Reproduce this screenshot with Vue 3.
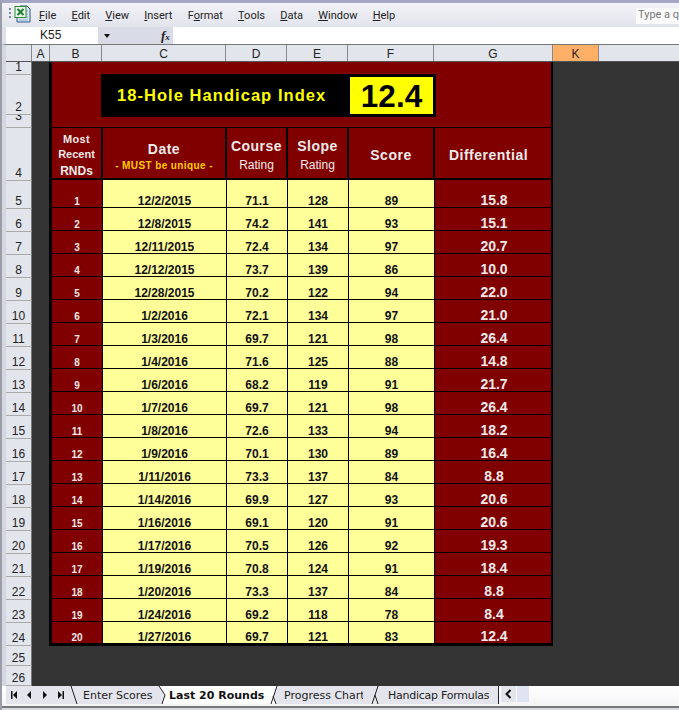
<script setup>
const columns = [
  { name: 'A', width: 18 },
  { name: 'B', width: 52 },
  { name: 'C', width: 124 },
  { name: 'D', width: 61 },
  { name: 'E', width: 61 },
  { name: 'F', width: 86 },
  { name: 'G', width: 119 },
  { name: 'K', width: 46, active: true },
]

const menuItems = [
  { before: '', key: 'F', after: 'ile' },
  { before: '', key: 'E', after: 'dit' },
  { before: '', key: 'V', after: 'iew' },
  { before: '', key: 'I', after: 'nsert' },
  { before: 'F', key: 'o', after: 'rmat' },
  { before: '', key: 'T', after: 'ools' },
  { before: '', key: 'D', after: 'ata' },
  { before: '', key: 'W', after: 'indow' },
  { before: '', key: 'H', after: 'elp' },
]

const rounds = [
  ['12/2/2015', '71.1', 128, 89, '15.8'],
  ['12/8/2015', '74.2', 141, 93, '15.1'],
  ['12/11/2015', '72.4', 134, 97, '20.7'],
  ['12/12/2015', '73.7', 139, 86, '10.0'],
  ['12/28/2015', '70.2', 122, 94, '22.0'],
  ['1/2/2016', '72.1', 134, 97, '21.0'],
  ['1/3/2016', '69.7', 121, 98, '26.4'],
  ['1/4/2016', '71.6', 125, 88, '14.8'],
  ['1/6/2016', '68.2', 119, 91, '21.7'],
  ['1/7/2016', '69.7', 121, 98, '26.4'],
  ['1/8/2016', '72.6', 133, 94, '18.2'],
  ['1/9/2016', '70.1', 130, 89, '16.4'],
  ['1/11/2016', '73.3', 137, 84, '8.8'],
  ['1/14/2016', '69.9', 127, 93, '20.6'],
  ['1/16/2016', '69.1', 120, 91, '20.6'],
  ['1/17/2016', '70.5', 126, 92, '19.3'],
  ['1/19/2016', '70.8', 124, 91, '18.4'],
  ['1/20/2016', '73.3', 137, 84, '8.8'],
  ['1/24/2016', '69.2', 118, 78, '8.4'],
  ['1/27/2016', '69.7', 121, 83, '12.4'],
]

const rowHeads = [
  { label: 1, height: 13 },
  { label: 2, height: 40 },
  { label: 3, height: 13, pad: 4 }, // squashed row, label is clipped like in Excel
  { label: 4, height: 53 },
  { label: 5, height: 28 },
  ...Array.from({ length: 19 }, (_, i) => ({ label: i + 6, height: 23 })),
  { label: 25, height: 20 },
  { label: 26, height: 20 },
]

// sheet tabs and the slanted separators that sit in front of each one
const gray = '#e4e5ec'
const tabs = [
  { name: 'Enter Scores', width: 70, sep: { width: 13, left: gray, right: gray, d: 'M1 0L7 18', poly: '' } },
  { name: 'Last 20 Rounds', width: 97, current: true, sep: { width: 16, left: gray, right: '#ffffff', d: 'M6 0L12 9L9 18', poly: '6,0 16,0 16,18 9,18 12,9' } },
  { name: 'Progress Chart', width: 79, sep: { width: 18, left: '#ffffff', right: gray, d: 'M11 0L5 18M7 10L10 18', poly: '11,0 18,0 18,18 10,18 7,10' } },
  { name: 'Handicap Formulas', width: 101, tight: true, sep: { width: 25, left: gray, right: gray, d: 'M15 0L9 18M12 9L15 18', poly: '' } },
]
</script>

<template>
  <div class="window">
    <div class="menubar">
      <svg class="doc-icon" width="24" height="20" viewBox="0 0 24 20">
        <rect x="1" y="3" width="2" height="2" fill="#7a8699" />
        <rect x="1" y="7" width="2" height="2" fill="#7a8699" />
        <rect x="1" y="11" width="2" height="2" fill="#7a8699" />
        <path d="M12 1h7l3 3v13H9V12z" fill="#dbe6f4" stroke="#31568c" />
        <path d="M14 6h6M14 9h6M14 12h6M11 15h9" stroke="#8fa8cc" />
        <rect x="7" y="1.5" width="11" height="11" fill="#e9f5e6" stroke="#2c8a3a" />
        <path d="M9.5 4l6 6M15.5 4l-6 6" stroke="#1f7d2f" stroke-width="2" />
      </svg>
      <span v-for="item in menuItems" :key="item.key" class="menu-item">{{ item.before }}<u>{{ item.key }}</u>{{ item.after }}</span>
      <span class="help-box">Type a q</span>
    </div>

    <div class="formula-bar">
      <div class="name-box">K55</div>
      <div class="name-tools">
        <span class="drop-arrow"></span>
        <span class="fx">f<small>x</small></span>
      </div>
      <div class="formula-input"></div>
    </div>

    <div class="sheet">
      <div class="col-heads">
        <div class="corner"></div>
        <div
          v-for="col in columns"
          :key="col.name"
          class="col-head"
          :class="{ active: col.active }"
          :style="{ width: col.width + 'px' }"
        >{{ col.name }}</div>
        <div class="col-head fill"></div>
      </div>

      <div class="sheet-body">
        <div class="row-heads">
          <div
            v-for="row in rowHeads"
            :key="row.label"
            class="row-head"
            :style="{ height: row.height + 'px', paddingBottom: (row.pad || 0) + 'px' }"
          >{{ row.label }}</div>
        </div>

        <div class="canvas">
          <div class="card">
            <div class="spacer-row"></div>
            <div class="title-row">
              <div class="title-box">
                <span class="title-text">18-Hole Handicap Index</span>
                <span class="index-box">12.4</span>
              </div>
            </div>
            <div class="spacer-row"></div>

            <div class="table-head">
              <div class="th rnds"><span class="most">Most</span><span>Recent</span><span class="rnds-big">RNDs</span></div>
              <div class="th date"><b class="th-main">Date</b><span class="must">- MUST be unique -</span></div>
              <div class="th low"><b class="th-main tall">Course</b><span class="th-sub">Rating</span></div>
              <div class="th low"><b class="th-main tall">Slope</b><span class="th-sub">Rating</span></div>
              <div class="th"><b class="th-main">Score</b></div>
              <div class="th last"><b class="th-main">Differential</b></div>
            </div>

            <div
              v-for="(round, i) in rounds"
              :key="i"
              class="round"
              :class="{ first: i === 0 }"
            >
              <div class="td num">{{ i + 1 }}</div>
              <div class="td">{{ round[0] }}</div>
              <div class="td">{{ round[1] }}</div>
              <div class="td">{{ round[2] }}</div>
              <div class="td">{{ round[3] }}</div>
              <div class="td diff">{{ round[4] }}</div>
            </div>
          </div>
        </div>
      </div>
    </div>

    <div class="tabbar">
      <div class="tab-nav">
        <svg width="64" height="18" viewBox="0 0 64 18">
          <path d="M5 5h1.5v8H5zM11 5v8L7 9z" fill="#111" />
          <path d="M25 5v8l-4-4z" fill="#111" />
          <path d="M37 5v8l4-4z" fill="#111" />
          <path d="M52 5v8l4-4zM56.5 5H58v8h-1.5z" fill="#111" />
        </svg>
      </div>
      <template v-for="tab in tabs" :key="tab.name">
        <svg class="tab-sep" :width="tab.sep.width" height="18" :viewBox="`0 0 ${tab.sep.width} 18`">
          <rect :width="tab.sep.width" height="18" :fill="tab.sep.left" />
          <polygon v-if="tab.sep.poly" :points="tab.sep.poly" :fill="tab.sep.right" />
          <path :d="tab.sep.d" stroke="#222" fill="none" />
        </svg>
        <div class="tab" :class="{ current: tab.current, tight: tab.tight }" :style="{ width: tab.width + 'px' }">{{ tab.name }}</div>
      </template>
      <div class="tab-end"></div>
      <div class="scroll-btn">
        <svg width="15" height="16" viewBox="0 0 15 16">
          <path d="M9.5 4L5.5 8l4 4" fill="none" stroke="#111" stroke-width="2" />
        </svg>
      </div>
      <div class="scroll-thumb"></div>
    </div>
    <div class="frame-bottom"></div>
  </div>
</template>

<style>
html, body {
  margin: 0;
  background: #333333;
}
</style>

<style scoped>
.window {
  width: 679px;
  height: 710px;
  overflow: hidden;
  display: flex;
  flex-direction: column;
  background: #e6e8f0;
  font-family: "Liberation Sans", Arial, sans-serif;
  border-top: 3px solid #a5a5c4;
  border-left: 2px solid #9a9ca8;
  box-sizing: border-box;
}

.menubar {
  height: 24px;
  flex: none;
  display: flex;
  align-items: center;
  padding-left: 6px;
  background: linear-gradient(#f2f3f7, #e2e4ec);
  font-family: Roboto, Tahoma, sans-serif;
  font-size: 11px;
  color: #222;
  position: relative;
}

.doc-icon {
  margin-right: 7px;
}

.menu-item {
  margin-right: 15.2px;
}

.help-box {
  position: absolute;
  right: 0;
  top: 5px;
  width: 41px;
  height: 16px;
  padding-left: 2px;
  background: #fafafa;
  color: #777;
  line-height: 14px;
  overflow: hidden;
  white-space: nowrap;
}

.formula-bar {
  height: 17px;
  flex: none;
  display: flex;
  padding-left: 4px;
  background: #dfe1ea;
}

.name-box {
  width: 92px;
  background: #fff;
  padding-left: 34px;
  box-sizing: border-box;
  font-size: 12px;
  line-height: 17px;
  color: #222;
}

.name-tools {
  width: 75px;
  display: flex;
  align-items: center;
  background: #d9dbe6;
}

.drop-arrow {
  margin-left: 6px;
  width: 0;
  height: 0;
  border: 3.5px solid transparent;
  border-top: 4px solid #111;
  border-bottom: 0;
}

.fx {
  margin-left: 51px;
  font-family: "Liberation Serif", serif;
  font-style: italic;
  font-weight: bold;
  font-size: 13px;
  color: #222;
}

.fx small {
  font-size: 9px;
}

.formula-input {
  flex: 1;
  background: #fff;
}

.sheet {
  height: 642px;
  flex: none;
  border-left: 4px solid #d4d6e0;
  box-sizing: border-box;
  background: #333333;
  border-top: 1px solid #777;
  overflow: hidden;
}

.col-heads {
  height: 17px;
  display: flex;
  background: #e3e5ec;
  border-bottom: 1px solid #555;
  box-sizing: border-box;
}

.corner {
  width: 26px;
  flex: none;
  border-right: 1px solid #888;
  box-sizing: border-box;
}

.col-head {
  flex: none;
  box-sizing: border-box;
  border-right: 1px solid #888;
  text-align: center;
  font-size: 12px;
  line-height: 18px;
  color: #222;
}

.col-head.active {
  background: #ffb066;
}

.col-head.fill {
  flex: 1;
  border-right: 0;
}

.sheet-body {
  display: flex;
}

.row-heads {
  width: 26px;
  flex: none;
}

.row-head {
  box-sizing: border-box;
  background: #e3e5ec;
  border-bottom: 1px solid #aaa;
  border-right: 1px solid #777;
  display: flex;
  align-items: flex-end;
  justify-content: center;
  font-size: 12px;
  line-height: 14px;
  color: #222;
  overflow: hidden;
}

.canvas {
  flex: 1;
  padding-left: 17px;
}

.card {
  width: 504px;
  box-sizing: border-box;
  background: #800000;
  border: solid #000;
  border-width: 0 2px 3px 3px;
}

.spacer-row {
  height: 13px;
}

.title-row {
  height: 40px;
  padding-left: 49px;
}

.title-box {
  width: 335px;
  height: 43px;
  margin-top: -1px;
  background: #000;
  display: flex;
  align-items: center;
  justify-content: space-between;
  box-sizing: border-box;
  padding: 3px;
}

.title-text {
  margin-left: 13px;
  color: #ffff00;
  font-weight: bold;
  font-size: 16.5px;
  letter-spacing: 1.05px;
  white-space: nowrap;
}

.index-box {
  width: 83px;
  height: 37px;
  background: #ffff00;
  color: #000;
  text-align: center;
  font-weight: bold;
  font-size: 31.5px;
  line-height: 38px;
}

.table-head {
  display: grid;
  grid-template-columns: 51px 124px 61px 61px 86px 116px;
  grid-template-rows: 50px;
  height: 53px;
  border-top: 1px solid #000;
  border-bottom: 2px solid #000;
  box-sizing: border-box;
}

.th {
  border-right: 2px solid #000;
  display: flex;
  flex-direction: column;
  align-items: center;
  justify-content: center;
  color: #f2eaea;
  white-space: nowrap;
  padding-top: 3px;
}

.th.low {
  padding-top: 4px;
}

.th.date {
  padding-top: 7px;
}

.th.last {
  border-right: 0;
  padding-right: 9px;
}

.rnds {
  padding-top: 5px;
  font-size: 11px;
  font-weight: bold;
  line-height: 15px;
}

.most {
  letter-spacing: 0.3px;
}

.rnds-big {
  font-size: 12px;
  line-height: 18px;
}

.th-main {
  font-size: 14px;
  letter-spacing: 0.5px;
  line-height: 18px;
}

.th-main.tall {
  line-height: 20px;
}

.th-sub {
  font-size: 12px;
  line-height: 18px;
}

.must {
  color: #ffcc00;
  font-size: 10px;
  font-weight: bold;
  letter-spacing: 0.4px;
  line-height: 16px;
}

.round {
  display: grid;
  grid-template-columns: 51px 124px 61px 61px 86px 116px;
  height: 23px;
  background: #ffff99;
  border-bottom: 1px solid #000;
  box-sizing: border-box;
  font-size: 12px;
  font-weight: bold;
  color: #111;
}

.round.first {
  height: 28px;
}

.round:last-child {
  border-bottom: 0;
  height: 21px;
}

.td {
  border-right: 1px solid #000;
  display: flex;
  align-items: flex-end;
  justify-content: center;
  line-height: 12px;
}

.td.num {
  background: #800000;
  color: #f2eaea;
  font-size: 10px;
  line-height: 11px;
}

.td.diff {
  background: #800000;
  color: #f2eaea;
  border-right: 0;
  font-size: 14px;
  padding-bottom: 1px;
  padding-left: 2px;
}

.tabbar {
  height: 20px;
  flex: none;
  display: flex;
  align-items: flex-start;
  background: linear-gradient(#ffffff, #f4f4f6);
  padding-left: 4px;
  font-family: "DejaVu Sans", Tahoma, sans-serif;
  font-size: 11px;
  color: #222;
}

.tab-nav {
  width: 64px;
  height: 18px;
  flex: none;
  background: #e4e5ec;
}

.tab-nav svg,
.tab-sep {
  display: block;
  flex: none;
}

.tab {
  height: 18px;
  flex: none;
  line-height: 19px;
  background: #e4e5ec;
  white-space: nowrap;
}

.tab.current {
  background: #fff;
  font-weight: bold;
  color: #111;
}

.tab.tight {
  letter-spacing: -0.25px;
}

.tab-end {
  width: 9px;
  height: 18px;
  flex: none;
  background: #e4e5ec;
  border-right: 1px solid #222;
}

.scroll-btn {
  margin-left: 2px;
  width: 15px;
  height: 16px;
  flex: none;
  background: #e4e5ec;
}

.scroll-btn svg {
  display: block;
}

.scroll-thumb {
  width: 12px;
  height: 16px;
  flex: none;
  background: #e0e4f2;
  border-left: 1px solid #f8f8fa;
}

.frame-bottom {
  flex: 1;
  background: #d8dae4;
  border-top: 2px solid #777;
}
</style>
